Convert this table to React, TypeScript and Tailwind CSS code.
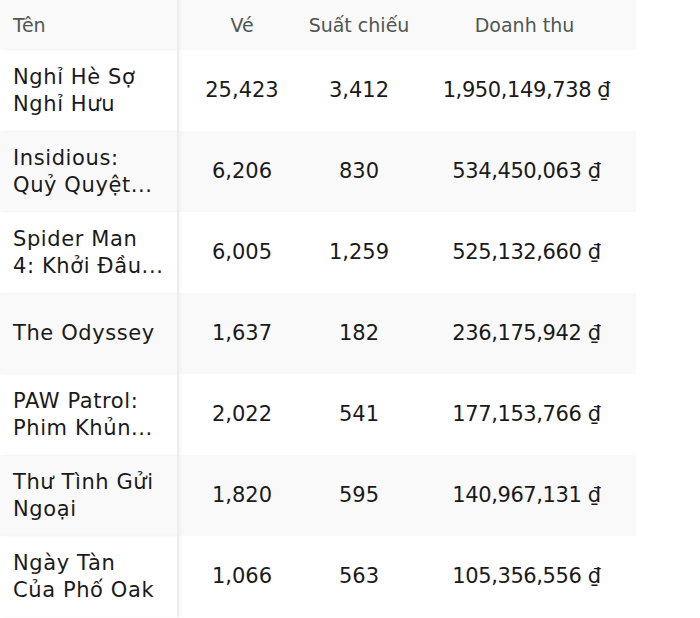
import React from "react";

const rows: { name: [string, string?]; ve: string; sc: string; dt: string }[] = [
  { name: ["Nghỉ Hè Sợ", "Nghỉ Hưu"], ve: "25,423", sc: "3,412", dt: "1,950,149,738 ₫" },
  { name: ["Insidious:", "Quỷ Quyệt..."], ve: "6,206", sc: "830", dt: "534,450,063 ₫" },
  { name: ["Spider Man", "4: Khởi Đầu..."], ve: "6,005", sc: "1,259", dt: "525,132,660 ₫" },
  { name: ["The Odyssey"], ve: "1,637", sc: "182", dt: "236,175,942 ₫" },
  { name: ["PAW Patrol:", "Phim Khủn..."], ve: "2,022", sc: "541", dt: "177,153,766 ₫" },
  { name: ["Thư Tình Gửi", "Ngoại"], ve: "1,820", sc: "595", dt: "140,967,131 ₫" },
  { name: ["Ngày Tàn", "Của Phố Oak"], ve: "1,066", sc: "563", dt: "105,356,556 ₫" },
];

export default function App() {
  return (
    <div className="w-[700px] h-[618px] bg-white overflow-hidden" style={{ fontFamily: '"DejaVu Sans", "Noto Sans", sans-serif' }}>
      <div className="w-[636px]">
        <div className="grid grid-cols-[179px_126px_108px_223px] h-[50px] bg-[#f9f9f9] text-[19px] text-[#4f5652] items-center">
          <div className="h-full flex items-center pl-[13px] border-r-2 border-[#ededed] shadow-[2px_0_3px_rgba(0,0,0,0.03)]">Tên</div>
          <div className="text-center">Vé</div>
          <div className="text-center">Suất chiếu</div>
          <div className="text-center">Doanh thu</div>
        </div>
        {rows.map((r, i) => (
          <div
            key={i}
            className={`grid grid-cols-[179px_126px_108px_223px] h-[81px] items-center text-[21px] text-[#1a1a1a] ${i % 2 === 1 ? "bg-[#f9f9f9]" : "bg-white"}`}
          >
            <div className="h-full flex flex-col justify-center pl-[13px] leading-[27px] tracking-[0.6px] border-r-2 border-[#ededed] shadow-[2px_0_3px_rgba(0,0,0,0.03)]">
              <span className="whitespace-nowrap">{r.name[0]}</span>
              {r.name[1] && <span className="whitespace-nowrap">{r.name[1]}</span>}
            </div>
            <div className="text-center">{r.ve}</div>
            <div className="text-center">{r.sc}</div>
            <div className="text-center tracking-[-0.4px] pl-[4px]">{r.dt}</div>
          </div>
        ))}
      </div>
    </div>
  );
}
